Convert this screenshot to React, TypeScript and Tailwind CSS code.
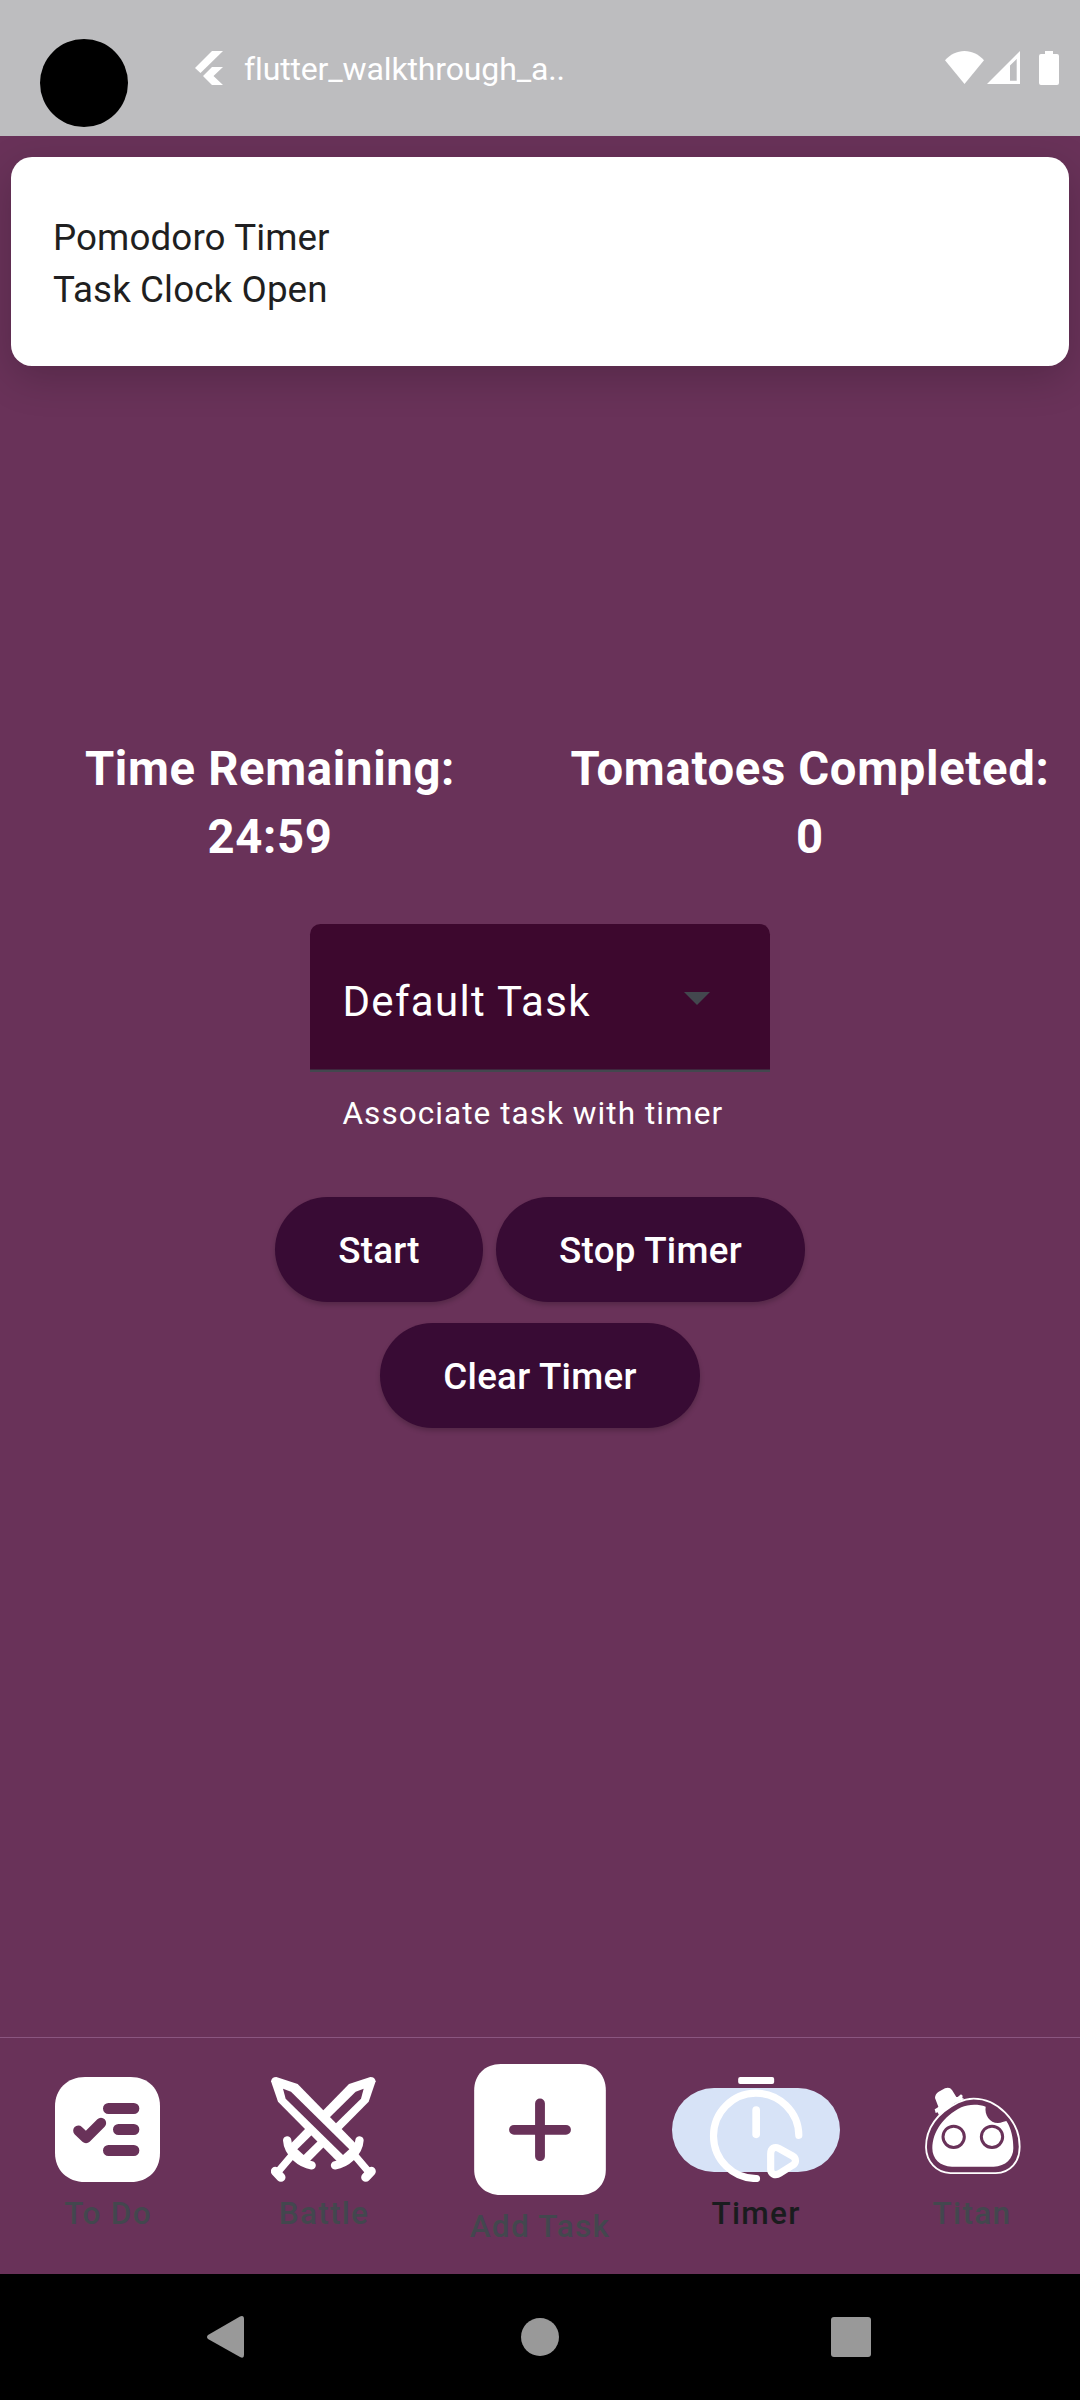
import type { ReactNode } from "react";

function FlutterMark() {
  return (
    <svg className="block h-[34px] w-[28px]" viewBox="0 0 28 34" fill="#fff">
      <path d="M17 0H28L5.5 22L0 17Z" />
      <path d="M17 16H28L18.5 25L28 34H17L8 25Z" />
    </svg>
  );
}

function WifiIcon() {
  return (
    <svg className="block h-[33px] w-[39px]" viewBox="0 0 39 33" fill="#fff">
      <path d="M19.5 33L0 9.3C5 3.5 12 0 19.5 0S34 3.5 39 9.3Z" />
    </svg>
  );
}

function SignalIcon() {
  return (
    <svg className="block h-[33px] w-[33px]" viewBox="0 0 33 33" fill="#fff">
      <path fillRule="evenodd" d="M33 0V33H0ZM29.7 8L23 14.5V29.7H29.7Z" />
    </svg>
  );
}

function BatteryIcon() {
  return (
    <svg className="block h-[34px] w-[20px]" viewBox="0 0 20 34" fill="#fff">
      <path d="M6 0H14V3H18Q20 3 20 5V32Q20 34 18 34H2Q0 34 0 32V5Q0 3 2 3H6Z" />
    </svg>
  );
}

function TodoIcon() {
  return (
    <svg className="mr-px block h-[105px] w-[105px]" viewBox="165 171 315 315">
      <path
        fill="#fff"
        d="M255 171H392C445 171 480 208 480 258V398C480 450 445 486 392 486H255C202 486 165 450 165 398V258C165 208 202 171 255 171Z"
      />
      <g stroke="#693259" strokeWidth="33" strokeLinecap="round" strokeLinejoin="round" fill="none">
        <path d="M325.5 265.5H401.500M355.500 328.500H401.500M325.500 391.500H401.500" />
        <path strokeWidth="31" d="M235 332L258 354L303 309" />
      </g>
    </svg>
  );
}

function Sword() {
  return (
    <>
      <path fill="#fff" d="M94 184Q96 171 110 171L174 192L355 377L300 432L115 245Z" />
      <g stroke="#fff" strokeLinecap="round" fill="none">
        <path strokeWidth="25" d="M359.500 361C358 386 345 401 333 412C320 424 304 433 286 436" />
        <path strokeWidth="22" d="M340 400L384 452" />
        <path strokeWidth="27" d="M395 454L378 472" />
      </g>
      <path fill="#693259" d="M130 206L154 215L329 388L310 405L138 236Z" />
    </>
  );
}

function BattleIcon() {
  return (
    <svg className="mr-px block h-[105px] w-[105px]" viewBox="94 171 315 315">
      <g transform="translate(502 0) scale(-1 1)">
        <Sword />
      </g>
      <Sword />
    </svg>
  );
}

function AddIcon() {
  return (
    <svg className="block h-[131px] w-[132px]" viewBox="102 131.500 396 393">
      <path
        fill="#fff"
        d="M182 131.500H420C467 131.500 497.500 165 497.500 210V448C497.500 493 467 524.500 420 524.500H182C135 524.500 102.500 493 102.500 448V210C102.500 165 135 131.500 182 131.500Z"
      />
      <path stroke="#693259" strokeWidth="29.500" strokeLinecap="round" d="M222 329H378M300 250V408" />
    </svg>
  );
}

function TimerIcon() {
  return (
    <svg className="block h-[105px] w-[105px]" viewBox="161.500 171 315 315">
      <rect x="264" y="171" width="108" height="21" rx="6" fill="#fff" />
      <g stroke="#fff" strokeWidth="21.500" strokeLinecap="round" strokeLinejoin="round" fill="none">
        <path d="M446 346A128 128 0 1 0 319 475.500" />
        <path strokeWidth="23" d="M318 270V343" />
        <path d="M361.500 402C361.500 384 374 379 386 385L427 408C439 415 439 429 427 436L389 460C375 469 361.500 462 361.500 448Z" />
      </g>
    </svg>
  );
}

function TitanIcon() {
  return (
    <svg className="mr-px block h-[105px] w-[105px]" viewBox="118 171 315 315">
      <path
        fill="#fff"
        d="M165 268L173 263L176 260L166 234Q166 222 177 215L196 205Q210 200 217 210L230 231L234 231L244 223L249 227L248 234L254 237L225 250L178 286L174 277L168 279Z"
      />
      <path
        fill="#693259"
        stroke="#fff"
        strokeWidth="5.500"
        d="M212 459.500H348C393 458 420 425 420 380C420 300 350 236 282 236C262 236 250 240 235 247C190 270 139 310 139 382C140 425 170 458 212 459.500Z"
      />
      <path
        fill="#fff"
        d="M217 440C180 440 158 415 158 385C159 335 190 290 245 262C265 253 295 252 318 260C314 285 330 309 355 309C366 309 372 304 380 303C395 325 401 355 401 385C401 415 378 440 342 440Z"
      />
      <circle cx="222" cy="350.500" r="32" fill="none" stroke="#693259" strokeWidth="9" />
      <circle cx="337" cy="350.500" r="32" fill="none" stroke="#693259" strokeWidth="9" />
    </svg>
  );
}

type NavItemProps = {
  label: string;
  icon: ReactNode;
  active?: boolean;
};

function NavItem({ label, icon, active = false }: NavItemProps) {
  return (
    <div className="flex w-[216px] flex-col items-center">
      <div className="grid place-items-center">
        {active && <div className="col-start-1 row-start-1 h-[84px] w-[168px] rounded-full bg-[#d7e3f7]" />}
        <div className="col-start-1 row-start-1">{icon}</div>
      </div>
      <span
        className={`mt-[11px] -mb-px text-[31.5px] leading-[42px] font-medium tracking-[1.31px] whitespace-nowrap ${
          active ? "text-[#1a1c1e]" : "text-[#43474e]"
        }`}
      >
        {label}
      </span>
    </div>
  );
}

function PillButton({ label, width }: { label: string; width: string }) {
  return (
    <button
      className={`h-[105px] rounded-full bg-[#380b34] pt-[2px] text-center text-[36.75px] font-medium tracking-[0.26px] text-white shadow-[0_3px_5px_rgba(0,0,0,0.2)] ${width}`}
    >
      {label}
    </button>
  );
}

function Stat({ title, value }: { title: string; value: string }) {
  return (
    <div className="w-1/2 text-center text-[47.25px] leading-[68px] font-bold tracking-[0.66px] whitespace-nowrap text-white">
      <div>{title}</div>
      <div>{value}</div>
    </div>
  );
}

export default function App() {
  return (
    <div className="flex h-[2400px] w-[1080px] flex-col overflow-hidden bg-[#693259] font-['Roboto',sans-serif]">
      <header className="flex h-[136px] shrink-0 items-start bg-[#bdbdbf]">
        <div className="mt-[39px] ml-[40px] h-[88px] w-[88px] rounded-full bg-black" />
        <div className="mt-[51px] ml-[67px]">
          <FlutterMark />
        </div>
        <span className="mt-[49px] ml-[21px] text-[32px] leading-[40px] tracking-[-0.14px] text-white">
          flutter_walkthrough_a..
        </span>
        <div className="mt-[51px] mr-[21px] ml-auto flex">
          <WifiIcon />
          <div className="ml-[3px]">
            <SignalIcon />
          </div>
          <div className="ml-[19px]">
            <BatteryIcon />
          </div>
        </div>
      </header>

      <section className="mx-[11px] mt-[21px] h-[209px] shrink-0 rounded-[21px] bg-white px-[42px] pt-[55px] text-[36.75px] leading-[52px] tracking-[0.1px] text-[#1f1f21] shadow-[0_12px_40px_rgba(0,0,0,0.19)]">
        <p>Pomodoro Timer</p>
        <p>Task Clock Open</p>
      </section>

      <main className="flex grow flex-col items-center pt-[369px]">
        <div className="flex w-full">
          <Stat title="Time Remaining:" value="24:59" />
          <Stat title="Tomatoes Completed:" value="0" />
        </div>

        <div className="mt-[53px] w-[460px]">
          <div className="flex h-[148px] items-start justify-between rounded-t-[10.5px] bg-[#3d082e] pr-[60px] pl-[32.5px] shadow-[inset_0_-2.5px_0_#43474e]">
            <span className="mt-[46px] text-[42px] leading-[63px] tracking-[1.31px] text-white">Default Task</span>
            <svg className="mt-[68px] block h-[13px] w-[26px]" viewBox="0 0 26 13" fill="#43474e">
              <path d="M0 0H26L13 13Z" />
            </svg>
          </div>
          <p className="mt-[21px] pl-[32.5px] text-[31.5px] leading-[42px] tracking-[1.05px] text-white">
            Associate task with timer
          </p>
        </div>

        <div className="mt-[62px] flex flex-col items-center gap-[21px]">
          <div className="flex gap-[13px]">
            <PillButton label="Start" width="w-[208px]" />
            <PillButton label="Stop Timer" width="w-[309px]" />
          </div>
          <PillButton label="Clear Timer" width="w-[320px]" />
        </div>
      </main>

      <nav className="flex h-[237px] shrink-0 items-center border-t border-[#8a5680] pb-[1px]">
        <NavItem label="To Do" icon={<TodoIcon />} />
        <NavItem label="Battle" icon={<BattleIcon />} />
        <NavItem label="Add Task" icon={<AddIcon />} />
        <NavItem label="Timer" icon={<TimerIcon />} active />
        <NavItem label="Titan" icon={<TitanIcon />} />
      </nav>

      <footer className="flex h-[126px] shrink-0 items-center bg-black">
        <svg className="ml-[206px] block h-[44px] w-[38px]" viewBox="0 0 38 44" fill="#999">
          <path d="M2 20L34 1.500Q38 0 38 4V40Q38 44 34 42L2 24Q0 22 2 20Z" />
        </svg>
        <div className="ml-[277px] h-[38px] w-[38px] rounded-full bg-[#999]" />
        <div className="ml-[272px] h-[40px] w-[40px] rounded-[3px] bg-[#999]" />
      </footer>
    </div>
  );
}
